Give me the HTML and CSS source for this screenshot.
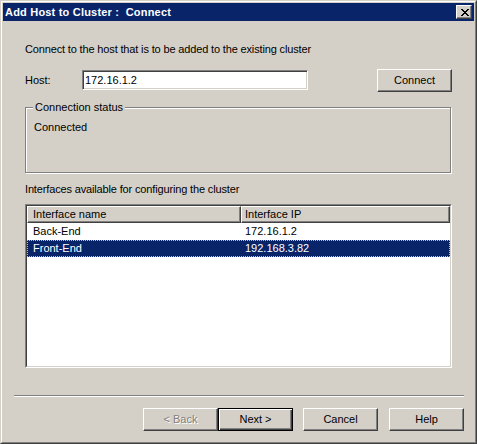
FILE: index.html
```html
<!DOCTYPE html>
<html>
<head>
<meta charset="utf-8">
<title>Add Host to Cluster : Connect</title>
<link rel="stylesheet" href="styles.css">
</head>
<body>
<div class="window">
  <div class="frame">
    <div class="titlebar">
      <span class="title">Add Host to Cluster :&nbsp; Connect</span>
      <button class="close" type="button" aria-label="Close">
        <svg width="8" height="7" viewBox="0 0 8 7" shape-rendering="crispEdges">
          <g fill="#000">
            <rect x="0" y="0" width="2" height="1"/><rect x="6" y="0" width="2" height="1"/>
            <rect x="1" y="1" width="2" height="1"/><rect x="5" y="1" width="2" height="1"/>
            <rect x="2" y="2" width="4" height="1"/>
            <rect x="3" y="3" width="2" height="1"/>
            <rect x="2" y="4" width="4" height="1"/>
            <rect x="1" y="5" width="2" height="1"/><rect x="5" y="5" width="2" height="1"/>
            <rect x="0" y="6" width="2" height="1"/><rect x="6" y="6" width="2" height="1"/>
          </g>
        </svg>
      </button>
    </div>
    <div class="body">
      <p class="line">Connect to the host that is to be added to the existing cluster</p>
      <div class="host-row">
        <label class="host-label" for="host">Host:</label>
        <input class="host-input" id="host" type="text" value="172.16.1.2">
        <button class="btn connect" type="button">Connect</button>
      </div>
      <fieldset class="group">
        <legend class="legend">Connection status</legend>
        <div class="status">Connected</div>
      </fieldset>
      <p class="line ifaces">Interfaces available for configuring the cluster</p>
      <div class="lv">
        <div class="lv-inner">
          <div class="lv-head">
            <div class="hcell c1">Interface name</div>
            <div class="hcell c2">Interface IP</div>
          </div>
          <div class="lv-row">
            <div class="cell c1">Back-End</div>
            <div class="cell c2">172.16.1.2</div>
          </div>
          <div class="lv-row selected">
            <div class="cell c1">Front-End</div>
            <div class="cell c2">192.168.3.82</div>
          </div>
        </div>
      </div>
    </div>
    <div class="sep"></div>
    <div class="buttons">
      <button class="btn disabled" type="button">&lt; Back</button>
      <button class="btn default" type="button">Next &gt;</button>
      <button class="btn gap" type="button">Cancel</button>
      <button class="btn gap2" type="button">Help</button>
    </div>
  </div>
</div>
</body>
</html>
```

FILE: styles.css
```css
html, body {
  margin: 0;
  padding: 0;
  background: #D4D0C8;
}
body {
  font-family: "Liberation Sans", Arial, sans-serif;
  font-size: 11px;
  color: #000;
}
.window {
  width: 477px;
  height: 444px;
  box-sizing: border-box;
  border: 1px solid;
  border-color: #D4D0C8 #404040 #404040 #D4D0C8;
  background: #D4D0C8;
}
.frame {
  height: 100%;
  box-sizing: border-box;
  border: 1px solid;
  border-color: #fff #808080 #808080 #fff;
  padding: 1px;
  display: flex;
  flex-direction: column;
}
.titlebar {
  height: 18px;
  flex: none;
  background: #0A246A;
  color: #fff;
  font-weight: bold;
  letter-spacing: 0.2px;
  display: flex;
  align-items: center;
  padding: 0 2px;
}
.title {
  line-height: 18px;
  white-space: nowrap;
}
.close {
  margin-left: auto;
  width: 16px;
  height: 14px;
  padding: 0;
  box-sizing: border-box;
  background: #D4D0C8;
  border: 1px solid;
  border-color: #fff #404040 #404040 #fff;
  box-shadow: inset -1px -1px 0 #808080;
  display: flex;
  align-items: center;
  justify-content: center;
}
.close svg {
  display: block;
  margin: 0 0 0 1px;
}
.body {
  padding: 22px 22px 0 22px;
  display: flex;
  flex-direction: column;
}
.line {
  margin: 0;
  height: 13px;
  line-height: 13px;
  letter-spacing: -0.15px;
  white-space: nowrap;
}
.host-row {
  margin-top: 13px;
  height: 23px;
  display: flex;
  align-items: flex-start;
}
.host-label {
  width: 57px;
  line-height: 20px;
  margin-top: 1px;
}
.host-input {
  width: 226px;
  height: 20px;
  margin: 1px 0 0 0;
  box-sizing: border-box;
  border: 1px solid;
  border-color: #808080 #fff #fff #808080;
  box-shadow: inset 1px 1px 0 #404040, inset -1px -1px 0 #D4D0C8;
  padding: 0 0 0 2px;
  font: inherit;
  color: #000;
  background: #fff;
  outline: none;
}
.btn {
  width: 75px;
  height: 23px;
  box-sizing: border-box;
  padding: 0;
  background: #D4D0C8;
  border: 1px solid;
  border-color: #fff #404040 #404040 #fff;
  box-shadow: inset -1px -1px 0 #808080;
  font: inherit;
  color: #000;
  line-height: 19px;
  text-align: center;
}
.connect {
  margin-left: auto;
}
.group {
  margin: 9px 0 0 0;
  width: 426px;
  box-sizing: border-box;
  border: 1px solid #808080;
  box-shadow: inset 1px 1px 0 #fff, 1px 1px 0 #fff;
  padding: 0 7px 38px 7px;
  min-width: 0;
}
.legend {
  padding: 0 2px;
  line-height: 13px;
  background: #D4D0C8;
}
.status {
  margin-top: 7px;
  line-height: 13px;
  height: 13px;
  padding-left: 1px;
}
.ifaces {
  margin-top: 10px;
}
.lv {
  margin-top: 8px;
  height: 164px;
  box-sizing: border-box;
  border: 1px solid;
  border-color: #808080 #fff #fff #808080;
}
.lv-inner {
  height: 100%;
  box-sizing: border-box;
  border: 1px solid;
  border-color: #404040 #D4D0C8 #D4D0C8 #404040;
  background: #fff;
}
.lv-head {
  display: flex;
  height: 17px;
}
.hcell {
  box-sizing: border-box;
  height: 17px;
  line-height: 15px;
  background: #D4D0C8;
  border: 1px solid;
  border-color: #fff #404040 #404040 #fff;
  box-shadow: inset -1px -1px 0 #808080;
  white-space: nowrap;
}
.hcell.c1 {
  width: 214px;
  padding-left: 5px;
}
.hcell.c2 {
  flex: 1;
  padding-left: 3px;
}
.lv-row {
  display: flex;
  height: 17px;
  box-sizing: border-box;
  border: 1px solid transparent;
  line-height: 15px;
}
.cell.c1 {
  width: 214px;
  box-sizing: border-box;
  padding-left: 5px;
}
.cell.c2 {
  flex: 1;
  padding-left: 3px;
}
.lv-row.selected {
  background: #0A246A;
  color: #fff;
  border: 1px dotted #D8C070;
}
.sep {
  margin: 27px 10px 0 11px;
  height: 0;
  border-top: 1px solid #808080;
  border-bottom: 1px solid #fff;
}
.buttons {
  margin-top: 11px;
  display: flex;
  justify-content: flex-end;
  padding-right: 10px;
}
.btn.disabled {
  color: #808080;
  text-shadow: 1px 1px 0 #fff;
}
.btn.default {
  border-color: #000;
  box-shadow: inset 1px 1px 0 #fff, inset -1px -1px 0 #404040, inset -2px -2px 0 #808080;
}
.btn.gap {
  margin-left: 10px;
}
.btn.gap2 {
  margin-left: 11px;
}
```
